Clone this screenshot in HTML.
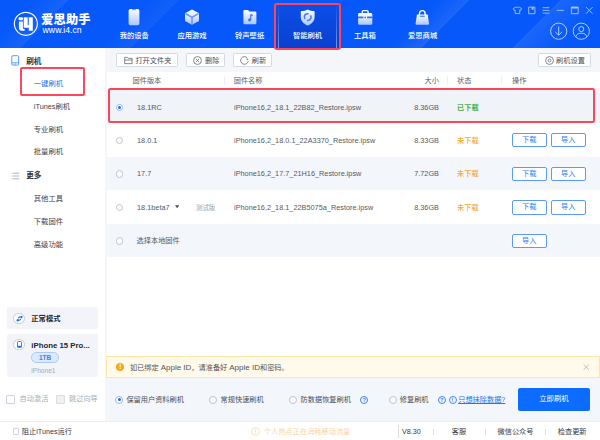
<!DOCTYPE html>
<html lang="zh-CN">
<head>
<meta charset="utf-8">
<title>爱思助手</title>
<style>
*{box-sizing:border-box;margin:0;padding:0}
html,body{width:600px;height:440px;overflow:hidden;background:#fff}
body{position:relative;font-family:"Liberation Sans","Noto Sans CJK SC",sans-serif;font-size:7.33px;color:#4a4f57;-webkit-font-smoothing:antialiased}
.abs{position:absolute}
.t{position:absolute;white-space:nowrap;line-height:12px;height:12px}
/* header */
#hdr{position:absolute;left:0;top:0;width:600px;height:48px;background:#0658fa;overflow:hidden;z-index:2}
#hdr .ray1{position:absolute;left:0;top:0;width:600px;height:48px;background:
linear-gradient(135deg,rgba(255,255,255,0) 23.3px,rgba(255,255,255,.07) 48.1px,rgba(255,255,255,0) 48.6px),
linear-gradient(135deg,rgba(255,255,255,0) 104.7px,rgba(255,255,255,.05) 125.9px,rgba(255,255,255,0) 126.4px),
linear-gradient(135deg,rgba(255,255,255,0) 310.4px,rgba(255,255,255,.09) 331.6px,rgba(255,255,255,0) 332.1px),
linear-gradient(135deg,rgba(255,255,255,0) 396.2px,rgba(255,255,255,.09) 396.7px,rgba(255,255,255,0) 430px)}
#hdr .ray2{display:none}
.nav{position:absolute;top:0;width:58px;height:47px;color:#fff;text-align:center}
.nav .lbl{position:absolute;left:-10px;right:-10px;top:29.5px;height:12px;line-height:12px;font-size:7.3px;font-weight:500;color:#fff;text-align:center;white-space:nowrap}
.nav svg{position:absolute;left:20px;top:8px;width:18px;height:18px;overflow:visible}
#act{position:absolute;left:276px;top:3px;width:63px;height:45px;background:linear-gradient(180deg,#0b4fe9 0%,#0a40cf 100%)}
#act:before,#act:after{content:"";position:absolute;top:0;bottom:0;width:1px;background:linear-gradient(180deg,rgba(255,255,255,0),rgba(255,255,255,.45))}
#act:before{left:2px}#act:after{right:2px}
.red{z-index:3;position:absolute;border:2px solid #fa475d;border-radius:3px;pointer-events:none}
/* sidebar */
#side{position:absolute;left:0;top:47.3px;width:105px;height:374px;background:#fff}
.si{position:absolute;left:33.8px;white-space:nowrap;height:12px;line-height:12px;font-size:7.33px;color:#3f444b}
.sh{position:absolute;left:26.2px;white-space:nowrap;height:12px;line-height:12px;font-size:7.6px;font-weight:700;color:#2d3138}
.card{position:absolute;left:7px;width:91.3px;background:#f2f4f9;border-radius:2px}
.ic{position:absolute;width:11.6px;height:11.6px;border-radius:50%;background:#fff;border:.7px solid #c5cad3}
/* main */
#main{position:absolute;left:105px;top:47.3px;width:495px;height:374px;background:#f4f6fa}
#tbl{position:absolute;left:2px;top:24.5px;width:493px;height:284.5px;background:#fff}
.btn{position:absolute;top:6px;height:13.6px;background:#fff;border:.7px solid #d5dae2;border-radius:1.5px;font-size:7.2px;line-height:12.2px;color:#4a4f57;white-space:nowrap}
.btn span{position:absolute;top:.7px;height:12.2px;line-height:12.2px}
.th{position:absolute;top:27.8px;height:12px;line-height:12px;font-size:7.2px;color:#5a6068;white-space:nowrap}
.sep{position:absolute;top:28.5px;width:1px;height:9px;background:#eceff3}
.row{position:absolute;left:2px;width:493px;height:33.6px}
.row.alt{background:#f3f6fb}
.row .c{position:absolute;top:11.7px;height:12px;line-height:12px;white-space:nowrap;font-size:8px;color:#555a63;transform:scaleX(.915);transform-origin:0 50%}
.row .c.r{transform-origin:100% 50%}
.row .c.z{transform:none}
.radio{position:absolute;width:7.4px;height:7.4px;border-radius:50%;border:.8px solid #bfc4cc;background:#fff}
.radio.on{border-color:#9db7e6}
.radio.on:after{content:"";position:absolute;left:1.4px;top:1.4px;width:3px;height:3px;border-radius:50%;background:#1a6bff}
.ob{position:absolute;top:10px;height:14.4px;width:35px;border:.8px solid #5b9bf6;border-radius:2px;background:#fff;color:#2f7df6;font-size:7.2px;line-height:12.8px;text-align:center}
.st{font-weight:700}
/* bottom */
#note{position:absolute;left:1.3px;top:309px;width:493.7px;height:21.4px;background:#fffaea;border:.8px solid #fce6a8}
#bot{position:absolute;left:0;top:330.4px;width:495px;height:43.6px;background:#f3f6fb}
.rl{position:absolute;top:16.1px;height:12px;line-height:12px;font-size:7.2px;color:#4a4f57;white-space:nowrap}
.q{position:absolute;width:8px;height:8px;border-radius:50%;border:.8px solid #3e86f7;color:#3e86f7;font-size:5.6px;line-height:6.4px;text-align:center;font-weight:700}
/* status */
#stat{position:absolute;left:0;top:421.3px;width:600px;height:18.7px;background:#fff;border-top:.8px solid #ebeef2}
#stat .s{position:absolute;top:3.6px;height:12px;line-height:12px;font-size:7.2px;color:#33373d;white-space:nowrap}
#stat .v{position:absolute;top:7px;width:1px;height:6px;background:#d9dde3}
.cb{position:absolute;width:8px;height:8px;border:.8px solid #ccd3e0;border-radius:1px;background:#fff}
</style>
</head>
<body>
<!-- ================= HEADER ================= -->
<div id="hdr">
  <div class="ray1"></div><div class="ray2"></div>
  <!-- logo -->
  <svg class="abs" style="left:12px;top:10px" width="28" height="28" viewBox="0 0 28 28">
    <circle cx="13.850" cy="13.800" r="11.500" fill="none" stroke="#fff" stroke-width="1.150"/>
    <rect x="6.600" y="7.200" width="4.300" height="3" rx=".7" fill="#fff"/>
    <path d="M6.900 11.600h4v6.300q0 1.100 1 1.100h.75v1.800h-2.750q-3 0-3-3z" fill="#fff"/>
    <path d="M11.700 7.200h4v7.800h1.050V7.200h4.050v13.600h-4.050v-3h-5.050z" fill="#fff"/>
  </svg>
  <div class="t" style="left:41.2px;top:12.6px;height:14px;line-height:14px;font-size:12.2px;font-weight:900;color:#fff;letter-spacing:.2px">爱思助手</div>
  <div class="t" style="left:42.6px;top:24.2px;font-size:8.7px;color:#fff;letter-spacing:0">www.i4.cn</div>

  <div id="act"></div>

  <!-- nav 1 -->
  <div class="nav" style="left:105.3px">
    <svg viewBox="0 0 18 18"><defs><linearGradient id="g1" x1="0" y1="0" x2="0" y2="1"><stop offset="0" stop-color="#ffffff"/><stop offset="1" stop-color="#a9c6ff"/></linearGradient></defs>
      <rect x="3.6" y="1" width="10.8" height="16.2" rx="1.8" fill="url(#g1)"/><rect x="7" y="1" width="4" height="1.2" rx=".5" fill="#7ea6ff"/></svg>
    <div class="lbl">我的设备</div>
  </div>
  <!-- nav 2 -->
  <div class="nav" style="left:163px">
    <svg viewBox="0 0 18 18"><path d="M9 1.4 16 5.2v7.8L9 16.8 2 13V5.2z" fill="url(#g1)"/><path d="M2.6 5.6 9 9.2l6.4-3.6M9 9.2v7" fill="none" stroke="#5b8dff" stroke-width="1.3"/></svg>
    <div class="lbl">应用游戏</div>
  </div>
  <!-- nav 3 -->
  <div class="nav" style="left:220.6px">
    <svg viewBox="0 0 18 18"><path d="M2.400 3.200q0-1.200 1.200-1.200h3.400l1.400 1.400h5.800q1.200 0 1.200 1.200v10.400q0 1.200-1.200 1.200H3.600q-1.200 0-1.200-1.200z" fill="url(#g1)"/><path d="M9.8 6.4v5.4" stroke="#2f6bf2" stroke-width="1.1" fill="none"/><circle cx="8.6" cy="12" r="1.4" fill="#2f6bf2"/><path d="M9.8 6.4l2 1" stroke="#2f6bf2" stroke-width="1.1"/></svg>
    <div class="lbl">铃声壁纸</div>
  </div>
  <!-- nav 4 (active) -->
  <div class="nav" style="left:278.5px">
    <svg viewBox="0 0 18 18"><path d="M8.700 1.500C10.700 2.700 13 3.100 15 3.100Q15.600 3.100 15.600 3.800V9.200C15.600 12.800 12.900 15.800 8.700 17.600C4.500 15.800 1.800 12.800 1.800 9.200V3.800Q1.800 3.100 2.400 3.100C4.400 3.100 6.700 2.700 8.700 1.500z" fill="url(#g1)"/><circle cx="8.700" cy="9.100" r="3.300" fill="none" stroke="#4d76dc" stroke-width="1.500" stroke-dasharray="8.100 2.270" stroke-dashoffset="2.320"/></svg>
    <div class="lbl">智能刷机</div>
  </div>
  <!-- nav 5 -->
  <div class="nav" style="left:335.9px">
    <svg viewBox="0 0 18 18"><path d="M6.300 5.400V3.800q0-1.200 1.200-1.200h3.400q1.200 0 1.200 1.200v1.600" fill="none" stroke="#fff" stroke-width="1.400"/><rect x="2.100" y="5" width="14.200" height="11.800" rx="1.400" fill="url(#g1)"/><path d="M2.100 9.400h14.200" stroke="#2f6df3" stroke-width="1.700"/><circle cx="9.200" cy="9.500" r="1.900" fill="#fff"/><circle cx="9.200" cy="9.500" r=".9" fill="#2f6df3"/></svg>
    <div class="lbl">工具箱</div>
  </div>
  <!-- nav 6 -->
  <div class="nav" style="left:393.6px">
    <svg viewBox="0 0 18 18"><path d="M5.500 7.200V5.600q0-3 2.800-3t2.800 3v1.600" fill="none" stroke="#fff" stroke-width="1.400"/><path d="M2.900 6.400h10.800l1.300 9.200q.1 1.200-1.200 1.200H2.800q-1.300 0-1.200-1.200z" fill="url(#g1)"/><path d="M5.800 8.200h5" stroke="#2f6df3" stroke-width="1.100"/></svg>
    <div class="lbl">爱思商城</div>
  </div>

  <!-- window controls -->
  <svg class="abs" style="left:508px;top:4px" width="90" height="14" viewBox="0 0 90 14" fill="none" stroke="#a9c5ff" stroke-width=".9">
    <path d="M7.300 3.200 5.200 4.600l1 1.800.9-.5v3.700h4.600V5.900l.9.500 1-1.800-2.100-1.400q-1.100 1-2.200 0z"/>
    <path d="M20.700 3.100h6.200v6.600h-6.200z"/><path d="M23.600 3.100h2v2.600h-2z" fill="#a9c5ff" stroke="none"/>
    <path d="M34.600 3.700h6.800M34.600 6.400h6.800M34.600 9.100h6.800"/>
    <path d="M48.800 6.400h7"/>
    <path d="M63.400 3.100h6.800v6.600h-6.800z"/><path d="M63.400 3.700h6.800" stroke-width="1.600"/>
    <path d="M78 3.100l6.600 6.600M84.600 3.100 78 9.700"/>
  </svg>
  <svg class="abs" style="left:548px;top:21px" width="46" height="21" viewBox="0 0 46 21" fill="none" stroke="#bdd3ff" stroke-width=".95">
    <circle cx="10.700" cy="10.200" r="8.100"/><path d="M10.700 5.600v8.400M7.200 10.800l3.500 3.400 3.500-3.400"/>
    <circle cx="33.300" cy="10.200" r="8.100"/><circle cx="33.300" cy="8.100" r="2.500"/><path d="M28 15.600q.6-3.400 5.300-3.400t5.300 3.400" />
  </svg>
</div>

<!-- ================= SIDEBAR ================= -->
<div id="side">
  <svg class="abs" style="left:11.400px;top:7.600px" width="9" height="11" viewBox="0 0 9 11" fill="none" stroke="#3f86f8" stroke-width=".85"><rect x=".8" y=".7" width="6.800" height="9.400" rx="1.100"/><path d="M.8 7.800h7" stroke-width=".8"/><path d="M3.600 9h1.400" stroke-width=".7"/></svg>
  <div class="sh" style="top:8.500px">刷机</div>
  <div class="si" style="top:31px;color:#1f6ff5">一键刷机</div>
  <div class="si" style="top:53.600px">iTunes刷机</div>
  <div class="si" style="top:76.900px">专业刷机</div>
  <div class="si" style="top:99.200px">批量刷机</div>
  <svg class="abs" style="left:11.800px;top:124.800px" width="8" height="8" viewBox="0 0 8 8" stroke="#9aa1ad" stroke-width=".8"><path d="M.3 1.200h7M.3 4h7M.3 6.800h7"/></svg>
  <div class="sh" style="top:123.200px">更多</div>
  <div class="si" style="top:146px">其他工具</div>
  <div class="si" style="top:169.100px">下载固件</div>
  <div class="si" style="top:191.800px">高级功能</div>

  <div class="card" style="top:260px;height:21.700px">
    <div class="ic" style="left:6.400px;top:5.600px"></div>
    <svg class="abs" style="left:8.600px;top:7.800px" width="7.200" height="7.200" viewBox="0 0 8 8" fill="#1f6ff5"><circle cx="2" cy="5.800" r="1.300"/><circle cx="6" cy="2.200" r="1.300"/><path d="M2.600 3.600 4.400 1.800M3.600 6.200 5.400 4.400" stroke="#1f6ff5" stroke-width="1.300"/></svg>
    <div class="t" style="left:24.300px;top:6px;font-weight:700;font-size:7.300px;color:#23272e">正常模式</div>
  </div>
  <div class="card" style="top:286.700px;height:43.100px">
    <div class="ic" style="left:6.400px;top:4.600px"></div>
    <svg class="abs" style="left:9.700px;top:7px" width="5" height="7" viewBox="0 0 5 7" fill="none" stroke="#1f6ff5" stroke-width=".9"><rect x=".5" y=".5" width="4" height="6" rx=".8"/><path d="M.5 4.800h4v1.200h-4z" fill="#1f6ff5" stroke="none"/></svg>
    <div class="t" style="left:24.300px;top:6px;font-weight:700;font-size:7.800px;color:#23272e">iPhone 15 Pro...</div>
    <div class="abs" style="left:24.300px;top:18.300px;width:27.400px;height:10.500px;border-radius:5.300px;background:#dce9fe;border:.7px solid #a8cafa;color:#3380f6;font-weight:700;font-size:6.400px;line-height:9.200px;text-align:center">1TB</div>
    <div class="t" style="left:24.300px;top:30.700px;font-size:6.600px;color:#a5abb5">iPhone1</div>
  </div>

  <div class="cb" style="left:6.300px;top:348px;width:8.400px;height:8.400px"></div>
  <div class="t" style="left:19.600px;top:346.200px;font-size:7.200px;color:#a9afb9">自动激活</div>
  <div class="cb" style="left:56.300px;top:348px;width:8.400px;height:8.400px;background:#f0f1f4;border-color:#d9dce2"></div>
  <div class="t" style="left:69px;top:346.200px;font-size:7.200px;color:#a9afb9">跳过向导</div>
</div>

<!-- ================= MAIN ================= -->
<div id="main">
  <div id="tbl"></div>

  <!-- toolbar -->
  <div class="btn" style="left:11px;width:62.300px">
    <svg class="abs" style="left:6.600px;top:1.900px" width="9" height="9" viewBox="0 0 8 8" fill="none" stroke="#6b717a" stroke-width=".75"><path d="M.6 6.800V1.200h2.400l.8.900h3.400v4.700z"/><path d="M.6 3.600h6.600"/></svg>
    <span style="left:18.400px">打开文件夹</span>
  </div>
  <div class="btn" style="left:81.300px;width:39px">
    <svg class="abs" style="left:6.200px;top:1.900px" width="9" height="9" viewBox="0 0 8 8" fill="none" stroke="#6b717a" stroke-width=".75"><circle cx="4" cy="4" r="3.500"/><path d="M2.600 2.600l2.800 2.800M5.400 2.600 2.600 5.400"/></svg>
    <span style="left:17.800px">删除</span>
  </div>
  <div class="btn" style="left:128px;width:39px">
    <svg class="abs" style="left:6.200px;top:1.900px" width="9" height="9" viewBox="0 0 8 8" fill="none" stroke="#6b717a" stroke-width=".75"><path d="M7.300 4.600A3.400 3.400 0 1 1 6.400 1.600"/><path d="M7.600 2.600 6.200 3.800 5.600 2.200z" fill="#666c75" stroke="none"/></svg>
    <span style="left:17.800px">刷新</span>
  </div>
  <div class="btn" style="left:432.500px;width:53px">
    <svg class="abs" style="left:6.200px;top:1.900px" width="9" height="9" viewBox="0 0 8 8" fill="none" stroke="#6b717a" stroke-width=".75"><circle cx="4" cy="4" r="3.500"/><circle cx="4" cy="4" r="1.300"/></svg>
    <span style="left:17.600px">刷机设置</span>
  </div>

  <!-- table header -->
  <div class="th" style="left:27.500px">固件版本</div>
  <div class="sep" style="left:118.700px"></div>
  <div class="th" style="left:128.700px">固件名称</div>
  <div class="th" style="left:319px;width:15px;text-align:right">大小</div>
  <div class="sep" style="left:341.700px"></div>
  <div class="th" style="left:352px">状态</div>
  <div class="sep" style="left:396.300px"></div>
  <div class="th" style="left:407px">操作</div>

  <!-- rows -->
  <div class="row alt" style="top:41px;height:34.400px;background:#f0f3f8">
    <div class="radio on" style="left:8.800px;top:15.400px"></div>
    <div class="c" style="left:29.600px;top:13.700px">18.1RC</div>
    <div class="c" style="left:126.700px;top:13.700px">iPhone16,2_18.1_22B82_Restore.ipsw</div>
    <div class="c r" style="left:281.500px;top:13.700px;width:50px;text-align:right">8.36GB</div>
    <div class="c z st" style="left:350px;top:13.700px;font-size:7.200px;color:#4db14f">已下载</div>
  </div>
  <div class="row" style="top:75.700px">
    <div class="radio" style="left:8.800px;top:13.700px"></div>
    <div class="c" style="left:29.600px">18.0.1</div>
    <div class="c" style="left:126.700px">iPhone16,2_18.0.1_22A3370_Restore.ipsw</div>
    <div class="c r" style="left:281.500px;width:50px;text-align:right">8.33GB</div>
    <div class="c z st" style="left:350px;font-size:7.200px;font-weight:500;color:#f8a82a">未下载</div>
    <div class="ob" style="left:404.700px">下载</div><div class="ob" style="left:443.800px">导入</div>
  </div>
  <div class="row alt" style="top:109.300px">
    <div class="radio" style="left:8.800px;top:13.700px"></div>
    <div class="c" style="left:29.600px">17.7</div>
    <div class="c" style="left:126.700px">iPhone16,2_17.7_21H16_Restore.ipsw</div>
    <div class="c r" style="left:281.500px;width:50px;text-align:right">7.72GB</div>
    <div class="c z st" style="left:350px;font-size:7.200px;font-weight:500;color:#f8a82a">未下载</div>
    <div class="ob" style="left:404.700px">下载</div><div class="ob" style="left:443.800px">导入</div>
  </div>
  <div class="row" style="top:142.900px">
    <div class="radio" style="left:8.800px;top:13.700px"></div>
    <div class="c" style="left:29.600px">18.1beta7</div>
    <svg class="abs" style="left:67.800px;top:15.200px" width="4.400" height="3.400" viewBox="0 0 4.400 3.400"><path d="M0 .2h4.400L2.200 3.200z" fill="#4d525a"/></svg>
    <div class="c z" style="left:89px;font-size:6.400px;color:#9aa0aa">测试版</div>
    <div class="c" style="left:126.700px">iPhone16,2_18.1_22B5075a_Restore.ipsw</div>
    <div class="c r" style="left:281.500px;width:50px;text-align:right">8.36GB</div>
    <div class="c z st" style="left:350px;font-size:7.200px;font-weight:500;color:#f8a82a">未下载</div>
    <div class="ob" style="left:404.700px">下载</div><div class="ob" style="left:443.800px">导入</div>
  </div>
  <div class="row alt" style="top:176.500px">
    <div class="radio" style="left:8.800px;top:13.700px"></div>
    <div class="c z" style="left:29.600px;font-size:7.200px">选择本地固件</div>
    <div class="ob" style="left:404.700px">导入</div>
  </div>

  <!-- notice -->
  <div id="note">
    <div class="abs" style="left:8.900px;top:6px;width:8.200px;height:8.200px;border-radius:50%;background:#f9a61c;color:#fff;font-size:6.400px;font-weight:700;line-height:8.200px;text-align:center">!</div>
    <div class="t" style="left:22.600px;top:4.300px;font-size:7.200px;color:#50555d">如已绑定 <span style="font-size:8px">Apple ID</span>，请准备好 <span style="font-size:8px">Apple ID</span>和密码。</div>
    <svg class="abs" style="left:475.600px;top:6.600px" width="6.400" height="6.400" viewBox="0 0 6 6" stroke="#aab0ba" stroke-width=".7"><path d="M.5.5l5 5M5.500.5l-5 5"/></svg>
  </div>

  <!-- bottom panel -->
  <div id="bot">
    <div class="radio on" style="left:10.300px;top:18px;width:8px;height:8px"></div>
    <div class="rl" style="left:21.400px">保留用户资料刷机</div>
    <div class="radio" style="left:104.300px;top:18px;width:8px;height:8px"></div>
    <div class="rl" style="left:115.600px">常规快速刷机</div>
    <div class="radio" style="left:184.300px;top:18px;width:8px;height:8px"></div>
    <div class="rl" style="left:195.600px">防数据恢复刷机</div>
    <div class="q" style="left:255.200px;top:18.300px">?</div>
    <div class="radio" style="left:283.500px;top:18px;width:8px;height:8px"></div>
    <div class="rl" style="left:294.800px">修复刷机</div>
    <div class="q" style="left:332.700px;top:18.300px">?</div>
    <div class="q" style="left:343.500px;top:18.300px">!</div>
    <div class="rl" style="left:353.200px;color:#2272f3;text-decoration:underline">只想抹除数据?</div>
    <div class="abs" style="left:413.100px;top:10.300px;width:71.700px;height:22.800px;border-radius:2px;background:#0c6cff;color:#fff;font-size:7.400px;line-height:22.400px;text-align:center">立即刷机</div>
  </div>
</div>

<!-- ================= STATUS BAR ================= -->
<div id="stat">
  <div class="cb" style="left:12.500px;top:5.800px;width:6.800px;height:6.800px"></div>
  <div class="s" style="left:21.800px">阻止iTunes运行</div>
  <svg class="abs" style="left:251px;top:4.700px" width="9" height="9" viewBox="0 0 9 9" fill="none" stroke="#fbd8a6" stroke-width=".8"><circle cx="4.500" cy="4.500" r="3.900"/><path d="M4.500 2.300v2.800M4.500 6v.9"/></svg>
  <div class="s" style="left:264px;color:#fbd3a0">个人热点正在消耗移动流量</div>
  <div class="v" style="left:398px;top:3px;height:13px"></div>
  <div class="s" style="left:402px">V8.30</div>
  <div class="v" style="left:432.500px"></div>
  <div class="s" style="left:451.700px">客服</div>
  <div class="v" style="left:485px"></div>
  <div class="s" style="left:497.500px">微信公众号</div>
  <div class="v" style="left:545px"></div>
  <div class="s" style="left:557.800px">检查更新</div>
</div>

<!-- red annotation boxes -->
<div class="red" style="left:274.200px;top:2.500px;width:67px;height:47.200px"></div>
<div class="red" style="left:19.500px;top:67px;width:65.500px;height:29.300px;border-radius:2px"></div>
<div class="red" style="left:108px;top:88px;width:487px;height:35px;border-radius:2.500px"></div>
</body>
</html>
